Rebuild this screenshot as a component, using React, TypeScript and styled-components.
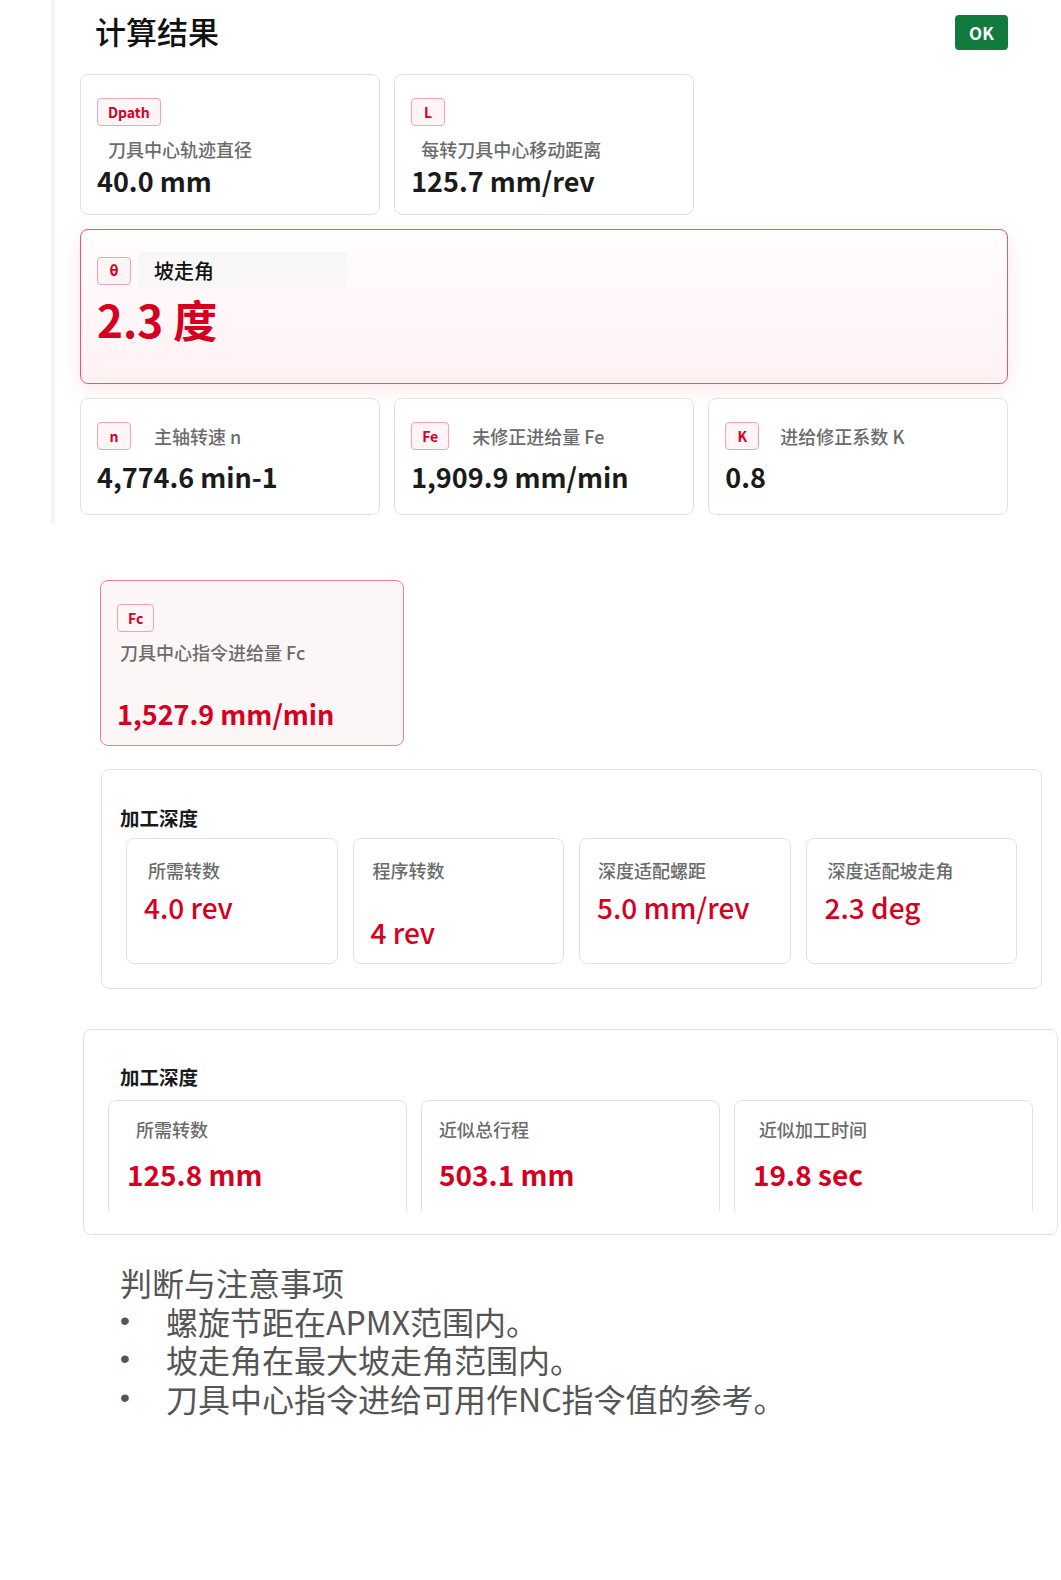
import styled, { createGlobalStyle } from "styled-components";

const RED = "#d5001f";

const GlobalStyle = createGlobalStyle`
  body {
    margin: 0;
    background: #fff;
    font-family: "Noto Sans CJK SC", "Noto Sans", sans-serif;
  }
`;

const Page = styled.div`
  min-height: 1580px;
  padding-bottom: 40px;
  box-sizing: border-box;
`;

// top result panel with the faint left rule
const ResultPanel = styled.section`
  margin-left: 51px;
  width: 982px;
  box-sizing: border-box;
  border-left: 4px solid #f4f4f4;
  padding: 0 25px 8px 25px;
`;

const Header = styled.div`
  height: 65px;
  margin-bottom: 9px;
  display: flex;
  align-items: center;
  justify-content: space-between;
`;

const Title = styled.h2`
  margin: -3px 0 0 15px;
  font-size: 31px;
  line-height: 40px;
  font-weight: 500;
  color: #111;
`;

const OkBadge = styled.span`
  width: 53px;
  height: 35px;
  border-radius: 4px;
  background: #117a3e;
  color: #fff;
  font-size: 17px;
  font-weight: 700;
  display: flex;
  align-items: center;
  justify-content: center;
`;

const CardGrid = styled.div`
  display: grid;
  grid-template-columns: repeat(3, 1fr);
  gap: 14px 14.5px;
`;

const MetricCard = styled.div<{ $height: number }>`
  height: ${(p) => p.$height}px;
  box-sizing: border-box;
  border: 1px solid #e2e2e2;
  border-radius: 8px;
  background: #fff;
  padding: 23px 16px 0 16px;
`;

const HighlightCard = styled.div`
  grid-column: 1 / -1;
  height: 155px;
  box-sizing: border-box;
  border: 1px solid #e9586e;
  border-radius: 8px;
  background: linear-gradient(180deg, #fffdfd 0%, #fff1f4 100%);
  box-shadow: 0 6px 22px rgba(230, 40, 70, 0.11);
  padding: 22px 16px 0 16px;
`;

const Badge = styled.span`
  display: inline-flex;
  align-items: center;
  justify-content: center;
  box-sizing: border-box;
  height: 28px;
  min-width: 34px;
  padding: 0 10px;
  border: 1px solid #f3a3b0;
  border-radius: 4px;
  background: #fff4f6;
  color: ${RED};
  font-size: 14px;
  font-weight: 700;
`;

const ThetaGlyph = styled.span`
  font-family: "DejaVu Sans Mono", monospace;
  font-size: 15px;
  font-weight: 700;
`;

const InlineHead = styled.div<{ $gap: number }>`
  display: flex;
  align-items: center;
  gap: ${(p) => p.$gap}px;
`;

const Label = styled.div<{ $indent?: number; $top?: number }>`
  margin-top: ${(p) => p.$top ?? 0}px;
  padding-left: ${(p) => p.$indent ?? 0}px;
  font-size: 18px;
  line-height: 24px;
  font-weight: 500;
  color: #6b6b6b;
`;

const AngleLabel = styled.div`
  width: 208px;
  height: 37px;
  box-sizing: border-box;
  padding: 0 15px;
  display: flex;
  align-items: center;
  background: #f9f6f7;
  font-size: 20px;
  font-weight: 500;
  color: #111;
`;

const Value = styled.div<{ $top: number }>`
  margin-top: ${(p) => p.$top}px;
  font-size: 27px;
  line-height: 34px;
  font-weight: 600;
  color: #1b1b1b;
`;

const BigValue = styled.div`
  margin-top: 4px;
  font-size: 44px;
  line-height: 52px;
  font-weight: 700;
  color: ${RED};
`;

const FeedCard = styled.div`
  margin: 57px 0 0 100px;
  width: 304px;
  height: 166px;
  box-sizing: border-box;
  border: 1px solid #ef7e8e;
  border-radius: 8px;
  background: #fdf6f7;
  padding: 23px 16px 0 16px;
`;

const RedValue = styled.div<{
  $top: number;
  $indent?: number;
  $size?: number;
  $weight?: number;
}>`
  margin-top: ${(p) => p.$top}px;
  padding-left: ${(p) => p.$indent ?? 0}px;
  font-size: ${(p) => p.$size ?? 27}px;
  line-height: 36px;
  font-weight: ${(p) => p.$weight ?? 600};
  color: ${RED};
`;

const Section = styled.section<{
  $left: number;
  $width: number;
  $height: number;
  $top: number;
  $padTop: number;
}>`
  margin: ${(p) => p.$top}px 0 0 ${(p) => p.$left}px;
  width: ${(p) => p.$width}px;
  height: ${(p) => p.$height}px;
  box-sizing: border-box;
  border: 1px solid #e3e3e3;
  border-radius: 8px;
  padding: ${(p) => p.$padTop}px 24px 0 24px;
  overflow: hidden;
`;

const SectionTitle = styled.h3<{ $shift: number; $gapBelow: number }>`
  margin: 0 0 ${(p) => p.$gapBelow}px ${(p) => p.$shift}px;
  font-size: 19.5px;
  line-height: 28px;
  font-weight: 600;
  color: #1a1a1a;
`;

const TileRow = styled.div<{ $cols: number; $gap: number; $clip?: number }>`
  display: grid;
  grid-template-columns: repeat(${(p) => p.$cols}, 1fr);
  gap: ${(p) => p.$gap}px;
  ${(p) => (p.$clip ? `height: ${p.$clip}px; overflow: hidden;` : "")}
`;

const Tile = styled.div<{ $padTop: number }>`
  height: 126px;
  box-sizing: border-box;
  border: 1px solid #e2e2e2;
  border-radius: 8px;
  background: #fff;
  padding: ${(p) => p.$padTop}px 17px 0 17px;
`;

const Notes = styled.div`
  margin: 28px 0 0 120px;
  color: #555;
  font-size: 32px;
  line-height: 38.5px;
`;

const NotesTitle = styled.div`
  font-size: 32px;
`;

const NoteItem = styled.div`
  display: flex;
`;

const Bullet = styled.span`
  width: 46px;
  flex-shrink: 0;
  font-family: "Liberation Sans", sans-serif;
  font-size: 28px;
`;

const depthTiles = [
  { label: "所需转数", value: "4.0 rev", li: 4, vi: 0, top: 7 },
  { label: "程序转数", value: "4 rev", li: 2, vi: -1, top: 32 },
  { label: "深度适配螺距", value: "5.0 mm/rev", li: 1, vi: 0, top: 7 },
  { label: "深度适配坡走角", value: "2.3 deg", li: 4, vi: 1, top: 7 },
];

const pathTiles = [
  { label: "所需转数", value: "125.8 mm", li: 10, vi: 1 },
  { label: "近似总行程", value: "503.1 mm", li: 0, vi: 0 },
  { label: "近似加工时间", value: "19.8 sec", li: 7, vi: 1 },
];

const notes = [
  "螺旋节距在APMX范围内。",
  "坡走角在最大坡走角范围内。",
  "刀具中心指令进给可用作NC指令值的参考。",
];

export default function App() {
  return (
    <Page>
      <GlobalStyle />
      <ResultPanel>
        <Header>
          <Title>计算结果</Title>
          <OkBadge>OK</OkBadge>
        </Header>
        <CardGrid>
          <MetricCard $height={141}>
            <Badge>Dpath</Badge>
            <Label $top={11} $indent={11}>刀具中心轨迹直径</Label>
            <Value $top={3}>40.0 mm</Value>
          </MetricCard>
          <MetricCard $height={141}>
            <Badge>L</Badge>
            <Label $top={11} $indent={10}>每转刀具中心移动距离</Label>
            <Value $top={3}>125.7 mm/rev</Value>
          </MetricCard>
          <div />
          <HighlightCard>
            <InlineHead $gap={8}>
              <Badge>
                <ThetaGlyph>θ</ThetaGlyph>
              </Badge>
              <AngleLabel>坡走角</AngleLabel>
            </InlineHead>
            <BigValue>2.3 度</BigValue>
          </HighlightCard>
          <MetricCard $height={117}>
            <InlineHead $gap={23}>
              <Badge>n</Badge>
              <Label>主轴转速 n</Label>
            </InlineHead>
            <Value $top={10}>4,774.6 min-1</Value>
          </MetricCard>
          <MetricCard $height={117}>
            <InlineHead $gap={23}>
              <Badge>Fe</Badge>
              <Label>未修正进给量 Fe</Label>
            </InlineHead>
            <Value $top={10}>1,909.9 mm/min</Value>
          </MetricCard>
          <MetricCard $height={117}>
            <InlineHead $gap={21}>
              <Badge>K</Badge>
              <Label>进给修正系数 K</Label>
            </InlineHead>
            <Value $top={10}>0.8</Value>
          </MetricCard>
        </CardGrid>
      </ResultPanel>

      <FeedCard>
        <Badge>Fc</Badge>
        <Label $top={8} $indent={3}>刀具中心指令进给量 Fc</Label>
        <RedValue $top={32} $size={27}>1,527.9 mm/min</RedValue>
      </FeedCard>

      <Section $left={101} $width={941} $height={220} $top={23} $padTop={34}>
        <SectionTitle $shift={-6} $gapBelow={6}>加工深度</SectionTitle>
        <TileRow $cols={4} $gap={15}>
          {depthTiles.map((t) => (
            <Tile key={t.label} $padTop={19}>
              <Label $indent={t.li}>{t.label}</Label>
              <RedValue $top={t.top} $indent={t.vi} $size={28} $weight={500}>
                {t.value}
              </RedValue>
            </Tile>
          ))}
        </TileRow>
      </Section>

      <Section $left={83} $width={975} $height={206} $top={40} $padTop={33}>
        <SectionTitle $shift={12} $gapBelow={9}>加工深度</SectionTitle>
        <TileRow $cols={3} $gap={14} $clip={111}>
          {pathTiles.map((t) => (
            <Tile key={t.label} $padTop={16}>
              <Label $indent={t.li}>{t.label}</Label>
              <RedValue $top={15} $indent={t.vi} $size={28}>
                {t.value}
              </RedValue>
            </Tile>
          ))}
        </TileRow>
      </Section>

      <Notes>
        <NotesTitle>判断与注意事项</NotesTitle>
        {notes.map((n) => (
          <NoteItem key={n}>
            <Bullet>•</Bullet>
            <span>{n}</span>
          </NoteItem>
        ))}
      </Notes>
    </Page>
  );
}
